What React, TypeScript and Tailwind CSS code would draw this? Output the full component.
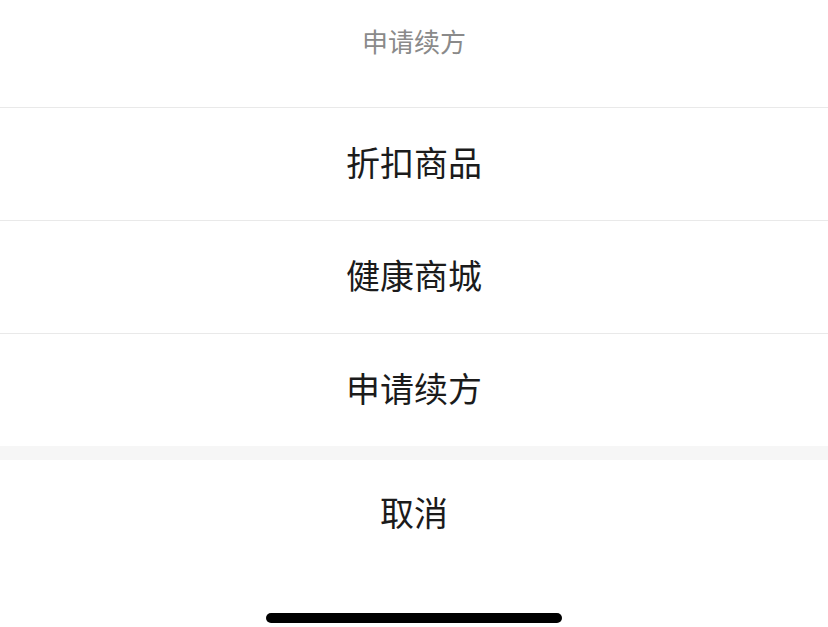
const font = `font-["Noto_Sans_CJK_SC","Noto_Sans",sans-serif]`;

export default function ActionSheetPage() {
  const options = ["折扣商品", "健康商城", "申请续方"];

  return (
    <main className={`flex h-[627px] w-[828px] flex-col bg-white ${font}`}>
      <header className="flex h-[107px] items-start justify-center pt-[23px] text-[26px] leading-[36px] text-[#8a8a8a]">
        申请续方
      </header>

      {options.map((label) => (
        <button
          key={label}
          className="flex h-[113px] w-full items-center justify-center border-t border-[#e9e9e9] pb-[5px] text-[34px] text-[#1b1b1b]"
        >
          {label}
        </button>
      ))}

      <div className="h-[14px] bg-[#f6f6f6]" />

      <button className="flex h-[107px] w-full items-center justify-center pb-[5px] text-[34px] text-[#1b1b1b]">
        取消
      </button>

      <div className="flex flex-1 items-start justify-center pt-[46px]">
        <span className="h-[10px] w-[296px] rounded-full bg-black" />
      </div>
    </main>
  );
}
